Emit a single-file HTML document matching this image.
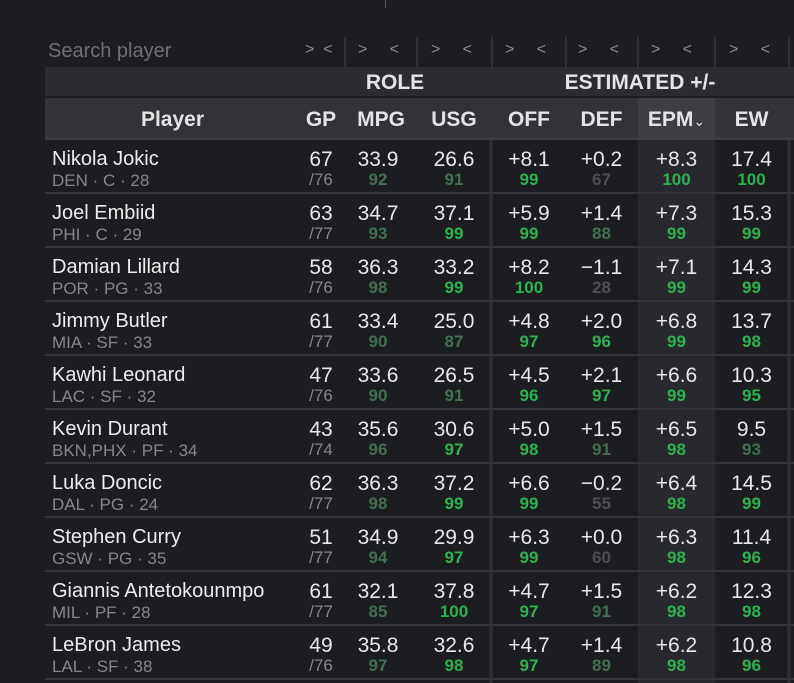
<!DOCTYPE html>
<html><head><meta charset="utf-8"><style>
*{margin:0;padding:0;box-sizing:border-box}
body{width:794px;height:683px;background:#1c1d21;font-family:"Liberation Sans",sans-serif;color:#e6e6e6;position:relative;overflow:hidden}
.abs{position:absolute}
.search{left:48px;top:40px;font-size:20px;color:#6f7075}
.flt{top:41px;font-size:16px;color:#8a8b8f}
.vs{top:37px;width:2px;height:30px;background:#2f3035}
.h1{left:45px;top:67px;width:749px;height:31px;background:#2b2c31;border-bottom:2px solid #1c1d21}
.h2{left:45px;top:98px;width:749px;height:42px;background:#323338;border-bottom:3px solid #3b3c41}
.ht{font-weight:bold;font-size:21px;color:#e4e4e4;text-align:center}
.row{left:45px;width:749px;height:54px;border-bottom:2px solid #34353a}
.c{position:absolute;text-align:center;top:8px}
.v{font-size:21px;line-height:23px;color:#e8e8e8}
.p{font-size:17px;line-height:18px;font-weight:bold}
.b{color:#2db24f}.d{color:#41704f}.g{color:#4c4e52}
.n{position:absolute;left:7px;top:8px}
.nm{font-size:20px;line-height:23px;color:#ededed}
.sub{font-size:17px;line-height:20px;color:#85868a}
.gp .p{font-weight:normal;color:#85868a}
</style></head><body>
<div class="abs" style="left:385px;top:0;width:1px;height:8px;background:#555"></div>
<div class="abs search">Search player</div>
<div class="abs flt" style="left:305px">&gt; &nbsp;&lt;</div>
<div class="abs vs" style="left:344px"></div>
<div class="abs flt" style="left:358px">&gt; &nbsp; &nbsp; &lt;</div>
<div class="abs vs" style="left:416px"></div>
<div class="abs flt" style="left:431px">&gt; &nbsp; &nbsp; &lt;</div>
<div class="abs vs" style="left:491px"></div>
<div class="abs flt" style="left:505px">&gt; &nbsp; &nbsp; &lt;</div>
<div class="abs vs" style="left:565px"></div>
<div class="abs flt" style="left:578px">&gt; &nbsp; &nbsp; &lt;</div>
<div class="abs vs" style="left:637px"></div>
<div class="abs flt" style="left:651px">&gt; &nbsp; &nbsp; &lt;</div>
<div class="abs vs" style="left:714px"></div>
<div class="abs flt" style="left:729px">&gt; &nbsp; &nbsp; &lt;</div>
<div class="abs vs" style="left:788px"></div>

<div class="abs h1"></div>
<div class="abs ht" style="left:345px;top:71px;width:100px">ROLE</div>
<div class="abs ht" style="left:540px;top:71px;width:200px">ESTIMATED +/-</div>
<div class="abs h2"></div>
<div class="abs" style="left:638px;top:98px;width:77px;height:42px;background:#3d3e44"></div>
<div class="abs ht" style="left:45px;top:108px;width:255px">Player</div>
<div class="abs ht" style="left:297px;top:108px;width:48px">GP</div>
<div class="abs ht" style="left:345px;top:108px;width:72px">MPG</div>
<div class="abs ht" style="left:417px;top:108px;width:74px">USG</div>
<div class="abs ht" style="left:493px;top:108px;width:72px">OFF</div>
<div class="abs ht" style="left:565px;top:108px;width:73px">DEF</div>
<div class="abs ht" style="left:638px;top:108px;width:77px">EPM<span style="font-weight:normal;font-size:14px">&#8964;</span></div>
<div class="abs ht" style="left:715px;top:108px;width:73px">EW</div>

<div class="abs" style="left:638px;top:140px;width:77px;height:543px;background:#28292e"></div>
<div class="abs" style="left:489px;top:140px;width:4px;height:543px;background:#2c2d32"></div>
<div class="abs" style="left:787px;top:140px;width:4px;height:543px;background:#2c2d32"></div>

<div id="rows"></div>
<script>
const data=[
["Nikola Jokic","DEN · C · 28","67","/76","33.9","92","26.6","91","+8.1","99","+0.2","67","+8.3","100","17.4","100"],
["Joel Embiid","PHI · C · 29","63","/77","34.7","93","37.1","99","+5.9","99","+1.4","88","+7.3","99","15.3","99"],
["Damian Lillard","POR · PG · 33","58","/76","36.3","98","33.2","99","+8.2","100","−1.1","28","+7.1","99","14.3","99"],
["Jimmy Butler","MIA · SF · 33","61","/77","33.4","90","25.0","87","+4.8","97","+2.0","96","+6.8","99","13.7","98"],
["Kawhi Leonard","LAC · SF · 32","47","/76","33.6","90","26.5","91","+4.5","96","+2.1","97","+6.6","99","10.3","95"],
["Kevin Durant","BKN,PHX · PF · 34","43","/74","35.6","96","30.6","97","+5.0","98","+1.5","91","+6.5","98","9.5","93"],
["Luka Doncic","DAL · PG · 24","62","/77","36.3","98","37.2","99","+6.6","99","−0.2","55","+6.4","98","14.5","99"],
["Stephen Curry","GSW · PG · 35","51","/77","34.9","94","29.9","97","+6.3","99","+0.0","60","+6.3","98","11.4","96"],
["Giannis Antetokounmpo","MIL · PF · 28","61","/77","32.1","85","37.8","100","+4.7","97","+1.5","91","+6.2","98","12.3","98"],
["LeBron James","LAL · SF · 38","49","/76","35.8","97","32.6","98","+4.7","97","+1.4","89","+6.2","98","10.8","96"]];
const cols=[[352,66],[417,74],[493,72],[565,73],[638,77],[715,73]];
function cl(p,j){p=+p;if(j==0)return "d";return p>=95?"b":p>=85?"d":"g"}
let h="";
data.forEach((r,i)=>{
 h+=`<div class="abs row" style="top:${140+i*54}px"><div class="n"><div class="nm">${r[0]}</div><div class="sub">${r[1]}</div></div>`;
 h+=`<div class="c gp" style="left:252px;width:48px"><div class="v">${r[2]}</div><div class="p">${r[3]}</div></div>`;
 cols.forEach((c,j)=>{h+=`<div class="c" style="left:${c[0]-45-(j==0?7:0)}px;width:${c[1]}px"><div class="v">${r[4+j*2]}</div><div class="p ${cl(r[5+j*2],j)}">${r[5+j*2]}</div></div>`});
 h+=`</div>`;});
document.getElementById("rows").innerHTML=h;
</script>
</body></html>
